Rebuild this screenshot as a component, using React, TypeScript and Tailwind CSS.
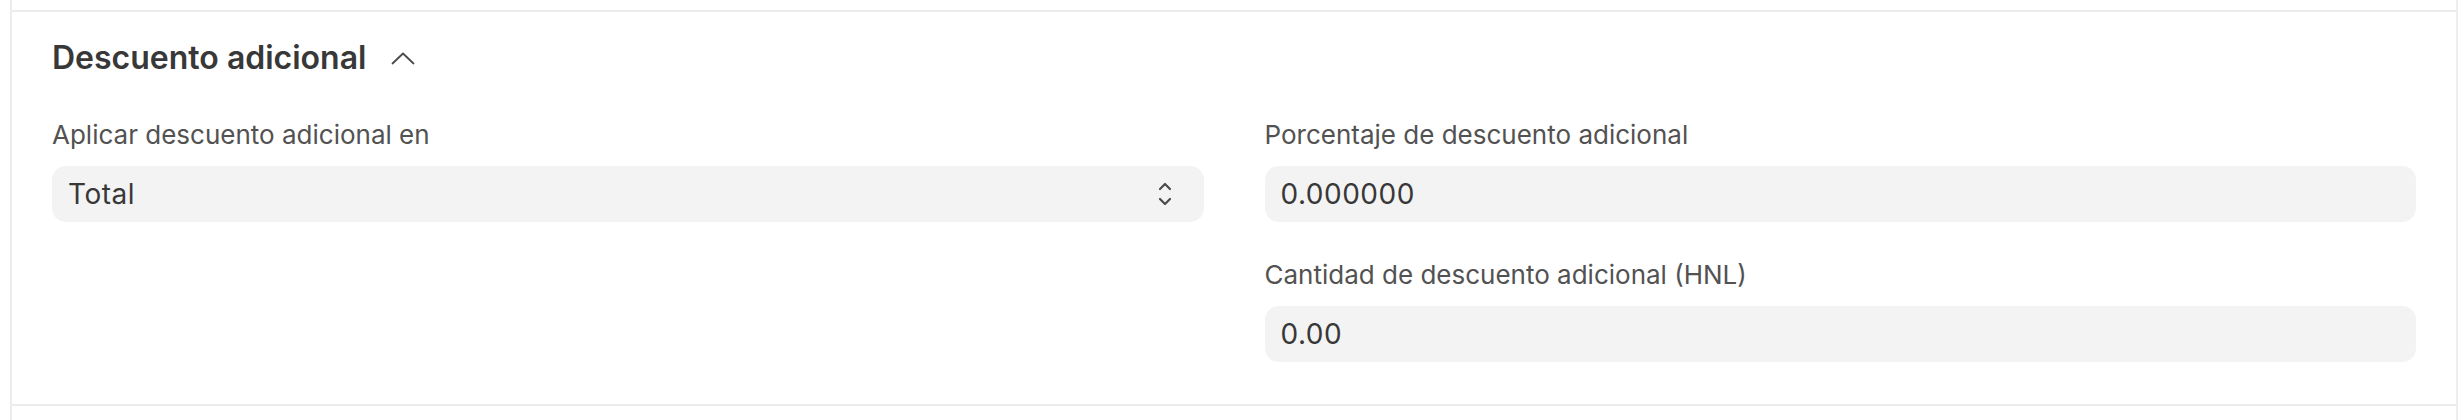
import { useState } from "react";

function ChevronUp() {
  return (
    <svg width="24" height="13" viewBox="0 0 24 13" fill="none" className="text-[#4a4a4a]">
      <path d="M1.5 11.5L12 1.5L22.5 11.5" stroke="currentColor" strokeWidth="1.8" strokeLinecap="round" strokeLinejoin="round" />
    </svg>
  );
}

function UpDown() {
  return (
    <svg width="14" height="26" viewBox="0 0 14 26" fill="none" className="text-[#4a4a4a]">
      <path d="M2 8L7 3L12 8" stroke="currentColor" strokeWidth="2.2" strokeLinecap="round" strokeLinejoin="round" />
      <path d="M2 18L7 23L12 18" stroke="currentColor" strokeWidth="2.2" strokeLinecap="round" strokeLinejoin="round" />
    </svg>
  );
}

function Field({ label, value, select }: { label: string; value: string; select?: boolean }) {
  return (
    <div>
      <div className="text-[26px] leading-[32px] text-[#525252] mb-[15px]">{label}</div>
      <div className="h-[56px] rounded-[14px] bg-[#f3f3f3] flex items-center justify-between pl-[16px] pr-[32px]">
        <span className="text-[28px] tracking-[0.5px] text-[#383838]">{value}</span>
        {select && <UpDown />}
      </div>
    </div>
  );
}

export default function App() {
  const [open, setOpen] = useState(true);

  return (
    <div className="bg-white h-[420px] overflow-hidden font-['Inter','Noto_Sans',sans-serif]">
      <div className="ml-[10px] mr-[4px] border-x-2 border-[#ededed] h-full">
        <div className="h-[10px]" />
        <section className="border-y-2 border-[#ededed] px-[40px] pt-[26px] pb-[42px]">
          <button className="flex items-center gap-[25px] mb-[41px]" onClick={() => setOpen(!open)}>
            <span className="text-[32px] leading-[40px] font-semibold text-[#383838]">Descuento adicional</span>
            <ChevronUp />
          </button>
          {open && (
            <div className="grid grid-cols-2 gap-x-[61px]">
              <div>
                <Field label="Aplicar descuento adicional en" value="Total" select />
              </div>
              <div className="space-y-[37px]">
                <Field label="Porcentaje de descuento adicional" value="0.000000" />
                <Field label="Cantidad de descuento adicional (HNL)" value="0.00" />
              </div>
            </div>
          )}
        </section>
      </div>
    </div>
  );
}
